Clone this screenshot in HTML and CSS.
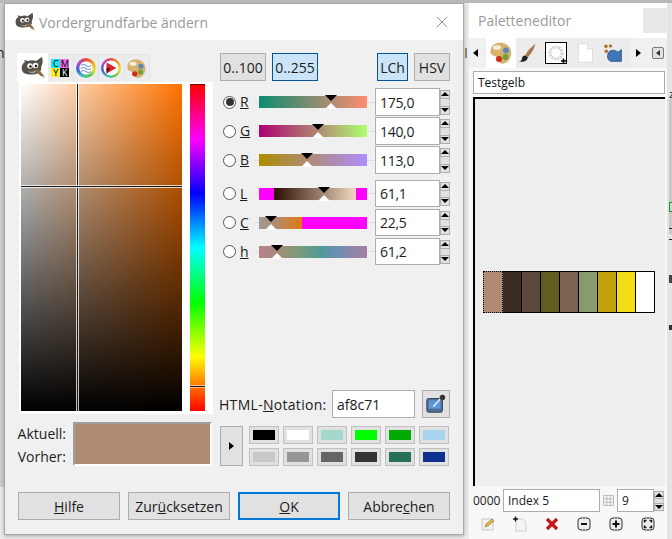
FILE: index.html
```html
<!DOCTYPE html>
<html lang="de">
<head>
<meta charset="utf-8">
<title>Vordergrundfarbe ändern</title>
<link rel="stylesheet" href="styles.css">
</head>
<body>
<div class="desk">
  <div class="behind-left"></div>
  <div class="behind-right"><i class="rb rb-z">z</i><i class="rb rb-band"></i><i class="rb rb-green"></i><i class="rb rb-d1"></i><i class="rb rb-d2"></i><i class="rb rb-d3"></i><i class="rb rb-d4"></i></div>
  <span class="behind-n">n</span>
  <span class="behind-i">I1</span>

  <section class="win dialog">
    <header class="title dialog-title">
      <svg class="wilber" viewBox="0 0 24 24"><use href="#wilber"/></svg>
      <span class="title-text">Vordergrundfarbe ändern</span>
      <svg class="close" viewBox="0 0 14 14"><path d="M1 1l12 12M13 1L1 13" stroke="#8a8a8a" stroke-width="1.1" fill="none"/></svg>
    </header>
    <div class="dialog-body">
      <div class="main">
        <div class="left">
          <div class="tabs">
            <div class="tab tab-on"><svg class="wilber" viewBox="0 0 24 24"><use href="#wilber"/></svg></div>
            <div class="tab"><div class="cmyk"><b class="c">C</b><b class="m">M</b><b class="y">Y</b><b class="k">K</b></div></div>
            <div class="tab"><div class="wheel wheel-water"><svg viewBox="0 0 20 20"><path d="M5 7.500q2.500-2 5 0t5 0M5 10.500q2.500-2 5 0t5 0M5 13.500q2.500-2 5 0t5 0" stroke="#7f98d2" stroke-width="1.200" fill="none"/></svg></div></div>
            <div class="tab"><div class="wheel wheel-tri"><svg viewBox="0 0 20 20"><path d="M5.500 4.500l10 5.500-10 5.500z" fill="#e0242a"/><path d="M5.500 10l4 0-4 5.500z" fill="#5a1414"/></svg></div></div>
            <div class="tab"><svg class="pal" viewBox="0 0 24 24"><use href="#palette"/></svg></div>
          </div>
          <div class="page">
            <div class="sv"><i class="cross-v"></i><i class="cross-h"></i></div>
            <div class="hue"><i class="hue-mark"></i></div>
          </div>
          <div class="compare">
            <div class="compare-labels"><span>Aktuell:</span><span>Vorher:</span></div>
            <div class="compare-swatch"></div>
          </div>
        </div>

        <div class="right">
          <div class="modes">
            <button class="btn mode mode-w1">0..100</button>
            <button class="btn mode mode-w2 on">0..255</button>
            <span class="mode-gap"></span>
            <button class="btn mode mode-w3 on">LCh</button>
            <button class="btn mode mode-w4">HSV</button>
          </div>

          <div class="sliders">
            <div class="srow"><span class="radio radio-on"></span><u class="slabel">R</u><div class="track"><div class="bar bar-r"><i class="mark" style="left:67%"></i></div></div><div class="spin"><span class="entry">175,0</span><div class="spinb"><i class="up"></i><i class="mid"></i><i class="dn"></i></div></div></div>
            <div class="srow"><span class="radio"></span><u class="slabel">G</u><div class="track"><div class="bar bar-g"><i class="mark" style="left:54.5%"></i></div></div><div class="spin"><span class="entry">140,0</span><div class="spinb"><i class="up"></i><i class="mid"></i><i class="dn"></i></div></div></div>
            <div class="srow"><span class="radio"></span><u class="slabel">B</u><div class="track"><div class="bar bar-b"><i class="mark" style="left:44%"></i></div></div><div class="spin"><span class="entry">113,0</span><div class="spinb"><i class="up"></i><i class="mid"></i><i class="dn"></i></div></div></div>
          </div>
          <div class="sliders sliders-lch">
            <div class="srow"><span class="radio"></span><u class="slabel">L</u><div class="track"><div class="bar bar-l"><i class="mark" style="left:60%"></i></div></div><div class="spin"><span class="entry">61,1</span><div class="spinb"><i class="up"></i><i class="mid"></i><i class="dn"></i></div></div></div>
            <div class="srow"><span class="radio"></span><u class="slabel">C</u><div class="track"><div class="bar bar-c"><i class="mark" style="left:11%"></i></div></div><div class="spin"><span class="entry">22,5</span><div class="spinb"><i class="up"></i><i class="mid"></i><i class="dn"></i></div></div></div>
            <div class="srow"><span class="radio"></span><u class="slabel">h</u><div class="track"><div class="bar bar-h"><i class="mark" style="left:17%"></i></div></div><div class="spin"><span class="entry">61,2</span><div class="spinb"><i class="up"></i><i class="mid"></i><i class="dn"></i></div></div></div>
          </div>

          <div class="html-row">
            <span class="html-label">HTML-<u>N</u>otation:</span>
            <span class="entry html-entry">af8c71</span>
            <button class="btn picker"><svg viewBox="0 0 24 24"><rect x="2" y="6" width="17" height="15" rx="2" fill="#4f6f96" stroke="#2e3b4c"/><rect x="4" y="8" width="13" height="9" fill="#5d97da"/><path d="M9 15l8-9" stroke="#dfe8f2" stroke-width="2"/><circle cx="19" cy="5" r="3" fill="#333"/></svg></button>
          </div>

          <div class="history">
            <button class="btn arrow-btn"><i class="tri-r"></i></button>
            <div class="swatches">
              <div class="sw"><i class="s1"></i></div><div class="sw"><i class="s2"></i></div><div class="sw"><i class="s3"></i></div><div class="sw"><i class="s4"></i></div><div class="sw"><i class="s5"></i></div><div class="sw"><i class="s6"></i></div>
              <div class="sw"><i class="s7"></i></div><div class="sw"><i class="s8"></i></div><div class="sw"><i class="s9"></i></div><div class="sw"><i class="s10"></i></div><div class="sw"><i class="s11"></i></div><div class="sw"><i class="s12"></i></div>
            </div>
          </div>
        </div>
      </div>

      <div class="actions">
        <button class="btn act"><u>H</u>ilfe</button>
        <button class="btn act">Zur<u>ü</u>cksetzen</button>
        <button class="btn act act-ok"><u>O</u>K</button>
        <button class="btn act">Abbre<u>c</u>hen</button>
      </div>
    </div>
  </section>

  <section class="win editor">
    <header class="title editor-title">
      <span class="title-text">Paletteneditor</span>
      <span class="ghost-close"></span>
    </header>
    <div class="ed-tabs">
      <i class="tri-l"></i>
      <div class="ed-tab ed-tab-on"><svg viewBox="0 0 24 24"><use href="#palette"/></svg></div>
      <div class="ed-tab"><svg viewBox="0 0 24 24"><path d="M22 1C17 5 12 10 10 15l3 2C17 13 21 7 22 1z" fill="#a9784f"/><path d="M10 15c-3 0-4 2-4 4s-2 3-4 3c4 1 10 1 11-5z" fill="#222"/></svg></div>
      <div class="ed-tab"><div class="pattern"><svg viewBox="0 0 20 20"><circle cx="10" cy="10" r="6" fill="none" stroke="#d2d2d2" stroke-width="3" stroke-dasharray="2 1"/><path d="M15 18h5M17.500 15.500v5" stroke="#000" stroke-width="1.500"/></svg></div></div>
      <div class="ed-tab"><svg viewBox="0 0 24 24"><path d="M4 1h11l6 6v16H4z" fill="#fff" stroke="#d8d8d8"/><path d="M15 1v6h6" fill="#f0f0f0" stroke="#d8d8d8"/></svg></div>
      <div class="ed-tab"><svg viewBox="0 0 24 24"><path d="M8 10c5-3 8 0 10 1l4-3v14H9c-4-2-5-8-1-12z" fill="#3f76b5" stroke="#234f86"/><circle cx="3.500" cy="4" r="2.200" fill="#b5702c"/><circle cx="9" cy="3.500" r="2" fill="#b5702c"/><circle cx="4" cy="10" r="2.200" fill="#b5702c"/></svg></div>
      <span class="ed-spacer"></span>
      <i class="tri-r tri-dark"></i>
      <div class="ed-menu"><i class="tri-l tri-small"></i></div>
    </div>
    <div class="ed-body">
      <span class="entry name-entry">Testgelb</span>
      <div class="pal-area">
        <div class="cells">
          <i class="cell cell-sel c1"></i><i class="cell c2"></i><i class="cell c3"></i><i class="cell c4"></i><i class="cell c5"></i><i class="cell c6"></i><i class="cell c7"></i><i class="cell c8"></i><i class="cell c9"></i>
        </div>
      </div>
      <div class="ed-fields">
        <span class="idx">0000</span>
        <span class="entry idx-entry">Index 5</span>
        <svg class="grid-ico" viewBox="0 0 11 11"><path d="M.5.5h10v10H.5zM.5 3.800h10M.5 7.200h10M3.800.5v10M7.200.5v10" fill="none" stroke="#bdbdbd"/></svg>
        <div class="spin spin-cols"><span class="entry">9</span><div class="spinb"><i class="up"></i><i class="mid"></i><i class="dn"></i></div></div>
      </div>
      <div class="ed-tools">
        <svg viewBox="0 0 16 16"><rect x="2" y="3" width="11" height="11" fill="#f2f2f2" stroke="#c8c8c8"/><path d="M5 11l1-3 6-5 2 2-6 5z" fill="#e6b84a" stroke="#8a6a20" stroke-width=".6"/></svg>
        <svg viewBox="0 0 16 16"><path d="M4 3h7l3 3v9H4z" fill="#f4f4f4" stroke="#cfcfcf"/><path d="M1 3h5M3.500.5v5" stroke="#111" stroke-width="1.400"/></svg>
        <svg viewBox="0 0 16 16"><path d="M3 3l10 10M13 3L3 13" stroke="#c9171e" stroke-width="3.200"/></svg>
        <svg viewBox="0 0 16 16"><rect x="2" y="2" width="12" height="12" rx="3" fill="#eee" stroke="#333"/><path d="M5 8h6" stroke="#111" stroke-width="2"/></svg>
        <svg viewBox="0 0 16 16"><rect x="2" y="2" width="12" height="12" rx="3" fill="#eee" stroke="#333"/><path d="M4.500 8h7M8 4.500v7" stroke="#111" stroke-width="2"/></svg>
        <svg viewBox="0 0 16 16"><rect x="2" y="2" width="12" height="12" rx="3" fill="#eee" stroke="#333"/><path d="M4.500 6.500v-2h2M9.500 4.500h2v2M11.500 9.500v2h-2M6.500 11.500h-2v-2" fill="none" stroke="#111" stroke-width="1.500"/></svg>
      </div>
    </div>
  </section>
</div>

<svg class="defs" width="0" height="0">
  <symbol id="wilber" viewBox="0 0 24 24">
    <path d="M1 14C0 10 2 7 4 6L3 4l4 1c3-1 6-1 8 0l6-4c1 3 1 7-1 10 1 3-1 6-5 7-5 1-13 1-14-4z" fill="#55514a"/>
    <path d="M14 15l7 6 2-1.500L17 13z" fill="#8a6a45"/>
    <path d="M20 20l3 3 1-3z" fill="#d8cdb8"/>
    <circle cx="9" cy="10" r="2.800" fill="#f4f4f4"/><circle cx="14.500" cy="9.500" r="2.800" fill="#f4f4f4"/>
    <circle cx="9.500" cy="10.500" r="1.200" fill="#111"/><circle cx="15" cy="10" r="1.200" fill="#111"/>
    <path d="M6 15q5 2 9-1l-1 3q-4 1-8-2z" fill="#a9a294"/>
  </symbol>
  <symbol id="palette" viewBox="0 0 24 24">
    <path d="M3 6c2-4 9-5 13-3 5 2 7 8 5 13-1 4-5 7-9 6-3-1-3-4-4-6-1-2-6-1-6-5 0-2 0-3 1-5z" fill="#d9b36c" stroke="#c39a55" stroke-width=".6"/>
    <ellipse cx="8" cy="6.500" rx="4" ry="2.300" fill="#f6efdc"/>
    <circle cx="17" cy="9.500" r="3" fill="#5f88b8"/>
    <circle cx="16.500" cy="16" r="3" fill="#72a03c"/>
    <circle cx="10" cy="18" r="3" fill="#cf2a1e"/>
  </symbol>
</svg>
</body>
</html>
```
FILE: styles.css
```css
* { box-sizing: border-box; }
html, body { margin: 0; padding: 0; }
body { width: 672px; height: 539px; overflow: hidden; font-family: "Open Sans", "Noto Sans", sans-serif; font-size: 14px; color: #1c1c1c; }
i { display: block; font-style: normal; }
button { font: inherit; color: inherit; padding: 0; margin: 0; }
.defs { position: absolute; }

.desk { position: relative; width: 672px; height: 539px; background: #ececec; overflow: hidden; border-top: 3px solid #b9b9b9; }
.behind-left { position: absolute; left: 0; top: 0; width: 4px; height: 484px; background: #cfcfcf; }
.behind-right { position: absolute; left: 667px; top: 0; width: 5px; height: 536px; background: #e4e4e4; }
.rb { position: absolute; left: 2px; }
.rb-z { top: 85px; font-size: 11px; line-height: 12px; }
.rb-band { top: 96px; width: 3px; height: 135px; background: #c9c9c9; }
.rb-green { top: 199px; width: 4px; height: 10px; background: #bde3c4; border: 1px solid #1f8a3c; }
.rb-d1 { top: 225px; width: 4px; height: 1px; background: #222; }
.rb-d2 { top: 236px; width: 4px; height: 1px; background: #222; }
.rb-d3 { top: 272px; width: 4px; height: 8px; background: #444; }
.rb-d4 { top: 322px; width: 4px; height: 5px; background: #333; }
.behind-n { position: absolute; left: -4px; top: 42px; font-size: 14px; line-height: 16px; }
.behind-i { position: absolute; left: 464px; top: 42px; font-size: 14px; line-height: 16px; color: #5a4a30; }

.win { position: absolute; display: flex; flex-direction: column; background: #f0f0f0; }
.dialog { left: 4px; top: 0; width: 460px; height: 532px; border: 1px solid #a8a8a8; box-shadow: 0 1px 4px rgba(0,0,0,.3); }
.editor { left: 469px; top: 0; width: 198px; height: 540px; background: #f8f8f8; }

.title { display: flex; align-items: center; background: #fff; color: #9a9a9a; font-size: 14px; flex: none; }
.dialog-title { height: 36px; padding: 0 15px 0 10px; gap: 4px; }
.dialog-title .wilber { width: 20px; height: 20px; }
.title-text { flex: 1; white-space: nowrap; }
.close { width: 12px; height: 12px; }
.editor-title { height: 35px; padding: 0 0 0 9px; align-items: center; }
.ghost-close { width: 25px; height: 25px; margin: 0 -1px 1px 0; background: #e9e9e9; }

.dialog-body { flex: 1; padding: 13px 13px 0 12px; display: flex; flex-direction: column; }
.main { display: flex; gap: 7px; height: 413px; }
.left { width: 196px; display: flex; flex-direction: column; }
.tabs { display: flex; height: 29px; flex: none; }
.tab { width: 25.500px; height: 27px; margin-top: 1px; display: flex; align-items: center; justify-content: center; background: #ececec; border: 1px solid #dfe3ea; border-width: 1px 1px 0 0; }
.tab-on { width: 31px; height: 29px; margin-top: 0; background: #fff; border: 0; }
.tab-on .wilber { width: 24px; height: 24px; }
.cmyk { display: grid; grid-template-columns: 9px 9px; grid-auto-rows: 9px; width: 18px; height: 18px; }
.cmyk b { font-weight: 400; font-size: 9px; line-height: 9px; text-align: center; color: #000; }
.cmyk .c { background: #19e6f0; }
.cmyk .m { background: #f06ee8; }
.cmyk .y { background: #f7ee2a; }
.cmyk .k { background: #000; color: #fff; }
.wheel { width: 20px; height: 20px; border-radius: 50%; background: conic-gradient(#e8463a, #e9a12c, #e8e13c, #5fc24a, #3fc0c0, #3f63d6, #b24ad0, #e8463a); display: flex; align-items: center; justify-content: center; }
.wheel svg { width: 20px; height: 20px; border-radius: 50%; }
.wheel-water svg { background: radial-gradient(closest-side, #fff 62%, transparent 70%); }
.wheel-tri svg { background: radial-gradient(closest-side, #fff 72%, transparent 78%); }
.pal { width: 21px; height: 23px; }

.page { flex: none; height: 332px; margin-left: 2px; padding: 2px 7px 3px 2px; background: #fff; display: flex; gap: 8px; }
.sv { position: relative; width: 161px; background: linear-gradient(to bottom, transparent, #000), linear-gradient(to right, #fff, #ff7300); }
.cross-v { position: absolute; left: 56px; top: 0; bottom: 0; width: 1px; background: #1a1a1a; box-shadow: 1px 0 0 rgba(255,255,255,.75), -1px 0 0 rgba(255,255,255,.75); }
.cross-h { position: absolute; top: 102px; left: 0; right: 0; height: 1px; background: #1a1a1a; box-shadow: 0 1px 0 rgba(255,255,255,.75), 0 -1px 0 rgba(255,255,255,.75); }
.hue { position: relative; width: 15px; border-top: 1px solid #700; background: linear-gradient(to bottom, #f00, #f0f 16.67%, #00f 33.33%, #0ff 50%, #0f0 66.67%, #ff0 83.33%, #f00); }
.hue-mark { position: absolute; left: 0; right: 0; top: 301px; height: 1px; background: #1a1a1a; box-shadow: 0 1px 0 #fff8, 0 -1px 0 #fff8; }

.compare { display: flex; margin-top: 8px; height: 44px; }
.compare-labels { width: 49px; display: flex; flex-direction: column; align-items: flex-end; justify-content: space-between; line-height: 23px; }
.compare-swatch { flex: 1; margin-left: 7px; margin-right: 1px; background: #af8c71; border: 2px solid; border-color: #a0a0a0 #fff #fff #a0a0a0; }

.right { width: 230px; display: flex; flex-direction: column; }
.btn { display: flex; align-items: center; justify-content: center; background: #e1e1e1; border: 1px solid #adadad; }
.modes { display: flex; height: 28px; gap: 6px; flex: none; }
.mode-w1 { width: 46px; }
.mode-w2 { width: 46px; }
.mode-w3 { width: 31px; }
.mode-w4 { width: 36px; }
.mode-gap { flex: 1; }
.on { background: #cce4f7; border-color: #005499; }

.sliders { margin-top: 7px; display: flex; flex-direction: column; gap: 1px; }
.sliders-lch { margin-top: 6px; gap: 2px; }
.sliders-lch .srow { height: 27px; }
.srow { display: flex; align-items: center; height: 28px; }
.radio { width: 13px; height: 13px; margin: 0 0 0 3px; border: 1px solid #555; border-radius: 50%; background: #fff; flex: none; display: flex; align-items: center; justify-content: center; }
.radio-on::before { content: ""; width: 8px; height: 8px; border-radius: 50%; background: #333; }
.slabel { width: 15px; margin-left: 4px; line-height: 18px; flex: none; }
.track { width: 120px; padding: 0 8px 0 4px; display: flex; align-items: center; flex: none; background: linear-gradient(#ddd, #ddd) center / 100% 1px no-repeat; }
.bar { position: relative; width: 108px; height: 12px; }
.mark { position: absolute; top: -1px; width: 0; height: 14px; }
.mark::before { content: ""; position: absolute; left: -6px; top: 0; border: 6px solid transparent; border-top: 6px solid #000; border-bottom: 0; }
.mark::after { content: ""; position: absolute; left: -6px; bottom: 0; border: 6px solid transparent; border-bottom: 6px solid #fff; border-top: 0; }
.bar-r { background: linear-gradient(to right, #0b8c71, #ff8c71); }
.bar-g { background: linear-gradient(to right, #af0071, #afff71); }
.bar-b { background: linear-gradient(to right, #af8c00, #af8cff); }
.bar-l { background: linear-gradient(to right, #f0f 0, #f0f 13.800%, #2a0e00 13.800%, #f0d8c0 89.500%, #f0f 89.500%, #f0f 100%); }
.bar-c { background: linear-gradient(to right, #a09a94 0, #b08c70 15%, #e07a10 39.500%, #f0f 39.500%, #f0f 100%); }
.bar-h { background: linear-gradient(to right, #b8808c 0, #a88a78 17%, #7f9a78 35%, #4f9a9a 58%, #6c8fb4 72%, #a880a0 100%); }

.entry { display: flex; align-items: center; background: #fff; border: 1px solid #adadad; padding-left: 4px; white-space: nowrap; }
.spin { display: flex; width: 75px; height: 100%; flex: none; }
.spin .entry { flex: 1; letter-spacing: -.3px; }
.spinb { width: 10px; display: flex; flex-direction: column; flex: none; padding: 2px 0 1px; background: #f0f0f0; }
.up, .dn { position: relative; height: 9px; background: #e1e1e1; border: 1px solid #adadad; }
.mid { flex: 1; background: #e1e1e1; border: 1px solid #c4c4c4; border-width: 0 1px; }
.up::before { content: ""; position: absolute; left: 0; top: 1px; border: 4px solid transparent; border-bottom: 4px solid #000; border-top: 0; }
.dn::before { content: ""; position: absolute; left: 0; top: 1px; border: 4px solid transparent; border-top: 4px solid #000; border-bottom: 0; }

.html-row { margin-top: auto; display: flex; align-items: center; height: 28px; }
.html-label { width: 112px; margin-left: -1px; white-space: nowrap; letter-spacing: .3px; }
.html-entry { width: 83px; height: 28px; margin-left: 1px; }
.picker { width: 28px; height: 28px; margin-left: 7px; }
.picker svg { width: 22px; height: 22px; }

.history { display: flex; margin-top: 8px; height: 40px; }
.arrow-btn { width: 23px; height: 40px; }
.tri-r { width: 0; height: 0; border: 4px solid transparent; border-left: 5px solid #000; border-right: 0; }
.swatches { margin-left: 6px; flex: 1; display: grid; grid-template-columns: repeat(6, 30px); grid-auto-rows: 18px; column-gap: 4px; row-gap: 4px; }
.sw { padding: 3px 3px; background: #e1e1e1; border: 1px solid #c0c0c0; }
.sw i { width: 100%; height: 100%; }
.s1 { background: #000; } .s2 { background: #fff; } .s3 { background: #a5d8cc; } .s4 { background: #0f0; } .s5 { background: #0a0; } .s6 { background: #a9d6ee; }
.s7 { background: #c8c8c8; } .s8 { background: #979797; } .s9 { background: #656565; } .s10 { background: #333; } .s11 { background: #26705a; } .s12 { background: #103090; }

.actions { display: flex; gap: 8px; margin-top: 26px; padding-left: 1px; }
.act { width: 102px; height: 28px; }
.act-ok { border: 2px solid #0078d7; }

.ed-tabs { display: flex; align-items: center; height: 30px; background: #f0f0f0; flex: none; }
.tri-l { width: 0; height: 0; border: 4px solid transparent; border-right: 5px solid #000; border-left: 0; margin-left: 4px; }
.ed-tab { width: 28.700px; height: 30px; flex: none; display: flex; align-items: center; justify-content: center; padding-right: 6px; background: #ececec; }
.ed-tab svg { width: 20px; height: 20px; flex: none; }
.ed-tab-on { width: 30px; padding: 0; background: #fff; margin-left: 8px; }
.ed-tab-on svg { width: 24px; height: 24px; }
.pattern { width: 22px; height: 22px; flex: none; background: #fff; border: 1px solid #000; }
.pattern svg { width: 20px; height: 20px; display: block; }
.ed-spacer { flex: 1; }
.tri-dark { margin-right: 11px; }
.ed-menu { width: 12px; height: 12px; margin-right: 3px; background: #e1e1e1; border: 1px solid #777; border-radius: 2px; display: flex; align-items: center; justify-content: center; }
.tri-small { margin: 0; border-width: 3px; border-right-width: 4px; border-left: 0; border-color: transparent #333 transparent transparent; }

.ed-body { flex: 1; padding: 3px 2px 0 4px; display: flex; flex-direction: column; }
.name-entry { height: 23px; padding-left: 4px; font-size: 12px; color: #111; }
.pal-area { margin-top: 3px; height: 389px; flex: none; background: #eeeeee; border-top: 2px solid #000; border-left: 2px solid #000; padding: 172px 0 0 8px; }
.cells { display: flex; width: 172px; height: 42px; }
.cell { flex: 1; border: 1px solid #000; border-left-width: 0; }
.cell:first-child { border: 1px dotted #fff; outline: 1px dotted #000; outline-offset: -1px; }
.c1 { background: #af8c71; } .c2 { background: #3a2d24; } .c3 { background: #5c483d; } .c4 { background: #625b22; } .c5 { background: #7c6250; } .c6 { background: #8b9a6e; } .c7 { background: #c0a20c; } .c8 { background: #f2dc14; } .c9 { background: #fff; }

.ed-fields { display: flex; align-items: center; height: 23px; margin-top: 3px; font-size: 12px; }
.idx { width: 30px; }
.idx-entry { width: 97px; height: 23px; padding-left: 4px; }
.grid-ico { width: 11px; height: 11px; margin: 0 3px 0 3px; flex: none; }
.spin-cols { width: 47px; height: 23px; }
.spin-cols .up, .spin-cols .dn { height: 8px; }
.spin-cols .up::before, .spin-cols .dn::before { top: 1px; }
.ed-tools { display: flex; justify-content: space-between; margin-top: 3px; padding: 0 9px 0 7px; height: 18px; align-items: center; }
.ed-tools svg { width: 16px; height: 16px; }
```
